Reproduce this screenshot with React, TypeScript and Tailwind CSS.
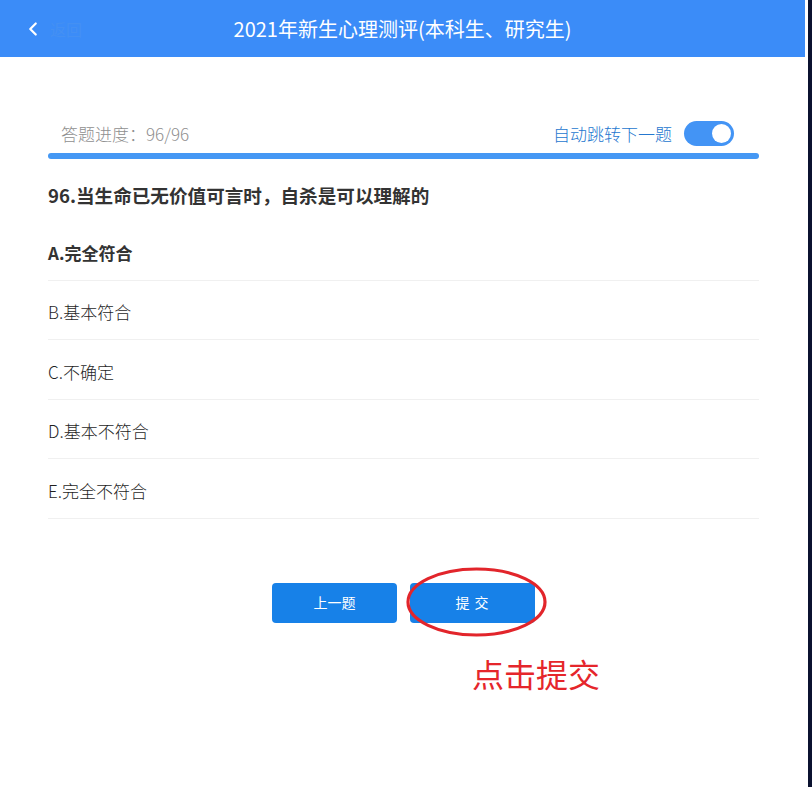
import { ChevronLeft } from "lucide-react"

const options = ["A.完全符合", "B.基本符合", "C.不确定", "D.基本不符合", "E.完全不符合"]

export default function App() {
  return (
    <div
      className="flex h-[787px] w-[812px] overflow-hidden bg-white"
      style={{ fontFamily: '"Noto Sans CJK SC", "Noto Sans", sans-serif' }}
    >
      <div className="flex w-[808px] flex-col">
        {/* header */}
        <header className="grid h-[57px] w-[805px] grid-cols-[1fr_auto_1fr] items-center bg-[#3b8cf8]">
          <div className="flex items-center pl-[22px]">
            <ChevronLeft className="h-[22px] w-[22px] text-white" strokeWidth={2.4} />
            <span className="ml-[6px] text-[16px] text-[#4490f3]">返回</span>
          </div>
          <h1 className="text-[20px] text-white">2021年新生心理测评(本科生、研究生)</h1>
          <div />
        </header>

        <main className="flex flex-col pl-[48px] pr-[49px] pt-[64px]">
          {/* progress */}
          <div className="flex h-[25px] items-center justify-between">
            <span className="pl-[13px] text-[17px] font-light text-[#8f8f8f]">答题进度：96/96</span>
            <div className="mr-[25px] flex items-center">
              <span className="text-[17px] font-light text-[#2577cf]">自动跳转下一题</span>
              <div className="ml-[12px] flex h-[25px] w-[50px] items-center justify-end rounded-full bg-[#4394f5] pr-[3px]">
                <div className="h-[19px] w-[19px] rounded-full bg-white" />
              </div>
            </div>
          </div>
          <div className="mt-[7px] h-[6px] rounded-full bg-[#4598f4]" />

          {/* question */}
          <p className="mt-[24px] text-[18.6px] leading-[24px] font-bold text-[#333]">
            96.当生命已无价值可言时，自杀是可以理解的
          </p>
          <ul className="mt-[14px]">
            {options.map((o, i) => (
              <li
                key={o}
                className={
                  "flex h-[59.5px] items-center border-b border-[#f0f0f0] pt-[4px] text-[17px] " +
                  (i === 0 ? "font-bold text-[#333]" : "font-light text-[#1f1f1f]")
                }
              >
                {o}
              </li>
            ))}
          </ul>

          {/* buttons */}
          <div className="mt-[64px] flex justify-center gap-[13px]">
            <button className="h-[40px] w-[125px] rounded-[4px] bg-[#1781e8] text-[14px] text-white">
              上一题
            </button>
            <div className="relative">
              <button className="h-[40px] w-[125px] rounded-[4px] bg-[#1781e8] text-[14px] tracking-[1px] text-white">
                提 交
              </button>
              <svg
                className="pointer-events-none absolute left-[-4px] top-[-16px]"
                width="141"
                height="70"
                viewBox="0 0 141 70"
              >
                <ellipse cx="70.5" cy="35" rx="68.5" ry="33" fill="none" stroke="#e2252b" strokeWidth="3.2" />
              </svg>
            </div>
          </div>

          <p className="mt-[30px] pl-[424px] text-[32px] leading-[40px] text-[#e5262b]">点击提交</p>
        </main>
      </div>
      <div className="w-[4px] bg-[#0b1230]" />
    </div>
  )
}
